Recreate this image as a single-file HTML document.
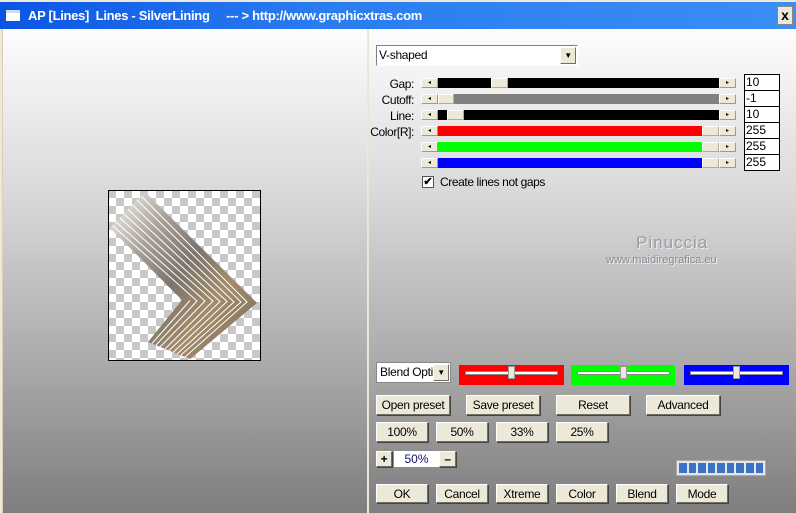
<!DOCTYPE html>
<html><head><meta charset="utf-8"><style>
*{margin:0;padding:0;box-sizing:border-box}
body{width:796px;height:513px;overflow:hidden;position:relative;font-family:"Liberation Sans",sans-serif;font-size:12px;background:#ece9d8}
.a{position:absolute}
#title{left:0;top:2px;width:796px;height:27px;background:linear-gradient(90deg,#0b55e4 0%,#2a7cf0 40%,#3b8ef5 100%);color:#fff;font-weight:bold;font-size:13px;line-height:27px}
#left{left:2px;top:29px;width:365px;height:484px;background:linear-gradient(#fdfdfd 0%,#d8d8d8 35%,#a9a9a9 70%,#7e7e7e 100%);border-left:1px solid #d8d0b8}
#right{left:368px;top:29px;width:428px;height:484px;background:linear-gradient(#fdfdfd 0%,#d8d8d8 35%,#a9a9a9 70%,#7e7e7e 100%);border-left:1px solid #e8e4d8}
.btn{position:absolute;background:#ece9d8;border:1px solid;border-color:#fff #716f64 #716f64 #fff;box-shadow:1px 1px 0 #444;text-align:center;font-size:12px;color:#000;line-height:18px;letter-spacing:-0.3px}
.arr{position:absolute;width:17px;height:10px;background:#ece9d8;border:1px solid;border-color:#fff #999 #999 #fff;font-size:6px;line-height:8px;text-align:center}
.thumb{position:absolute;height:10px;background:#ece9d8;border:1px solid;border-color:#fff #aaa #aaa #fff}
.val{position:absolute;left:744px;width:36px;height:17px;background:#fff;border:1px solid #000;font-size:12px;line-height:15px;padding-left:1px}
.lbl{position:absolute;right:382px;font-size:12px;color:#000;letter-spacing:-0.4px}
</style></head><body>
<div class="a" id="title"><span class="a" style="left:6px;top:8px;width:14px;height:11px;background:#fff;border-top:3px solid #cde"></span><span class="a" style="left:28px;top:0;letter-spacing:-0.3px">AP [Lines]&nbsp; Lines - SilverLining&nbsp;&nbsp;&nbsp;&nbsp; --- &gt; http://www.graphicxtras.com</span>
<span class="a" style="left:777px;top:4px;width:16px;height:19px;background:#ece9d8;border:1px solid #888;color:#000;font-size:14px;line-height:17px;text-align:center;font-weight:bold">x</span></div>
<div class="a" id="left"></div>
<div class="a" id="right"></div>

<svg class="a" style="left:108px;top:190px" width="153" height="171" viewBox="0 0 153 171">
<defs><pattern id="ck" width="16" height="16" patternUnits="userSpaceOnUse"><rect width="16" height="16" fill="#fff"/><rect width="8" height="8" fill="#c8c8c8"/><rect x="8" y="8" width="8" height="8" fill="#c8c8c8"/></pattern>
<linearGradient id="g" gradientUnits="userSpaceOnUse" x1="5" y1="20" x2="150" y2="130"><stop offset="0" stop-color="#e8e4de"/><stop offset="0.25" stop-color="#a8a098"/><stop offset="0.5" stop-color="#7c746c"/><stop offset="0.75" stop-color="#a38c6a"/><stop offset="1" stop-color="#857560"/></linearGradient>
</defs>
<rect x="0.5" y="0.5" width="152" height="170" fill="url(#ck)" stroke="#000"/>
<path d="M37 2 L2 38 L74 110 L40 152 L82 169 L149 113 Z" fill="url(#g)" stroke="none"/>
<g stroke="#fff" stroke-width="1" fill="none">
<polyline points="33,6 139,112 77,167"/>
<polyline points="29,10 133,112 73,165"/>
<polyline points="24.5,15 126,112 69,164"/>
<polyline points="20,19.5 119,111.5 65,162.5"/>
<polyline points="16,24 112,111.5 61,160.5"/>
<polyline points="12,28 105,111 57,159"/>
<polyline points="8,32 97,111 52,157"/>
<polyline points="4.5,35.5 89,111 48,155"/>
<polyline points="82,110.5 44,153.5"/>
</g></svg>

<div class="a" style="left:376px;top:45px;width:202px;height:21px;background:#fff;border:1px solid;border-color:#808080 #fff #fff #808080;font-size:12px;line-height:19px;padding-left:2px;letter-spacing:-0.3px">V-shaped</div>
<div class="btn" style="left:560px;top:47px;width:16px;height:17px;font-size:8px;line-height:15px;box-shadow:none">▼</div>

<div class="lbl" style="top:77px">Gap:</div>
<div class="lbl" style="top:93px">Cutoff:</div>
<div class="lbl" style="top:109px">Line:</div>
<div class="lbl" style="top:125px">Color[R]:</div>

<div class="a" style="left:438px;top:78px;width:281px;height:10px;background:#000"></div>
<div class="thumb" style="left:491px;top:78px;width:17px"></div>
<div class="a" style="left:438px;top:94px;width:281px;height:10px;background:#808080"></div>
<div class="thumb" style="left:438px;top:94px;width:16px"></div>
<div class="a" style="left:438px;top:110px;width:281px;height:10px;background:#000"></div>
<div class="thumb" style="left:447px;top:110px;width:17px"></div>
<div class="a" style="left:438px;top:126px;width:264px;height:10px;background:#f00"></div>
<div class="thumb" style="left:702px;top:126px;width:17px"></div>
<div class="a" style="left:438px;top:142px;width:264px;height:10px;background:#0f0"></div>
<div class="thumb" style="left:702px;top:142px;width:17px"></div>
<div class="a" style="left:438px;top:158px;width:264px;height:10px;background:#00f"></div>
<div class="thumb" style="left:702px;top:158px;width:17px"></div>
<div class="arr" style="left:421px;top:78px">◂</div><div class="arr" style="left:719px;top:78px">▸</div>
<div class="arr" style="left:421px;top:94px">◂</div><div class="arr" style="left:719px;top:94px">▸</div>
<div class="arr" style="left:421px;top:110px">◂</div><div class="arr" style="left:719px;top:110px">▸</div>
<div class="arr" style="left:421px;top:126px">◂</div><div class="arr" style="left:719px;top:126px">▸</div>
<div class="arr" style="left:421px;top:142px">◂</div><div class="arr" style="left:719px;top:142px">▸</div>
<div class="arr" style="left:421px;top:158px">◂</div><div class="arr" style="left:719px;top:158px">▸</div>
<div class="val" style="top:74px">10</div>
<div class="val" style="top:90px">-1</div>
<div class="val" style="top:106px">10</div>
<div class="val" style="top:122px">255</div>
<div class="val" style="top:138px">255</div>
<div class="val" style="top:154px">255</div>

<div class="a" style="left:422px;top:176px;width:12px;height:12px;background:#fff;border:1px solid #555;font-size:11px;line-height:10px;text-align:center;font-weight:bold">✔</div>
<div class="a" style="left:440px;top:175px;font-size:12px;letter-spacing:-0.4px">Create lines not gaps</div>

<div class="a" style="left:636px;top:233px;font-size:17px;color:#9a9aa8;letter-spacing:1px;text-shadow:1px 1px 0 #eee">Pinuccia</div>
<div class="a" style="left:606px;top:254px;font-size:11px;color:#8a8a96;text-shadow:1px 1px 0 #eee">www.maidiregrafica.eu</div>

<div class="a" style="left:376px;top:362px;width:75px;height:21px;background:#fff;border:1px solid #888;font-size:12px;line-height:19px;padding-left:3px;overflow:hidden;white-space:nowrap;letter-spacing:-0.3px">Blend Opti</div>
<div class="btn" style="left:433px;top:364px;width:16px;height:17px;font-size:8px;line-height:15px;box-shadow:none">▼</div>
<div class="a" style="left:459px;top:365px;width:105px;height:20px;background:#f00"></div>
<div class="a" style="left:571px;top:365px;width:104px;height:20px;background:#0f0"></div>
<div class="a" style="left:684px;top:365px;width:105px;height:20px;background:#00f"></div>
<div class="a" style="left:465px;top:371px;width:93px;height:4px;background:#fff;border:1px solid #888"></div>
<div class="a" style="left:577px;top:371px;width:93px;height:4px;background:#fff;border:1px solid #888"></div>
<div class="a" style="left:690px;top:371px;width:93px;height:4px;background:#fff;border:1px solid #888"></div>
<div class="a" style="left:508px;top:366px;width:7px;height:13px;background:#ece9d8;border:1px solid #999"></div>
<div class="a" style="left:620px;top:366px;width:7px;height:13px;background:#ece9d8;border:1px solid #999"></div>
<div class="a" style="left:733px;top:366px;width:7px;height:13px;background:#ece9d8;border:1px solid #999"></div>

<div class="btn" style="left:376px;top:395px;width:74px;height:20px">Open preset</div>
<div class="btn" style="left:466px;top:395px;width:74px;height:20px">Save preset</div>
<div class="btn" style="left:556px;top:395px;width:74px;height:20px">Reset</div>
<div class="btn" style="left:646px;top:395px;width:74px;height:20px">Advanced</div>
<div class="btn" style="left:376px;top:422px;width:52px;height:20px">100%</div>
<div class="btn" style="left:436px;top:422px;width:52px;height:20px">50%</div>
<div class="btn" style="left:496px;top:422px;width:52px;height:20px">33%</div>
<div class="btn" style="left:556px;top:422px;width:52px;height:20px">25%</div>
<div class="btn" style="left:376px;top:451px;width:16px;height:16px;line-height:14px;font-weight:bold">+</div>
<div class="a" style="left:394px;top:451px;width:45px;height:16px;background:#fff;color:#14146e;text-align:center;line-height:16px">50%</div>
<div class="btn" style="left:439px;top:451px;width:17px;height:16px;line-height:14px;font-weight:bold">–</div>
<div class="a" style="left:676px;top:460px;width:90px;height:16px;background:#e6e6e6;border:1px solid #aaa;padding:2px;display:flex;gap:2px">
<i style="flex:1;background:#3a72c8"></i><i style="flex:1;background:#3a72c8"></i><i style="flex:1;background:#3a72c8"></i><i style="flex:1;background:#3a72c8"></i><i style="flex:1;background:#3a72c8"></i><i style="flex:1;background:#3a72c8"></i><i style="flex:1;background:#3a72c8"></i><i style="flex:1;background:#3a72c8"></i><i style="flex:1;background:#3a72c8"></i></div>

<div class="btn" style="left:376px;top:484px;width:52px;height:19px">OK</div>
<div class="btn" style="left:436px;top:484px;width:52px;height:19px">Cancel</div>
<div class="btn" style="left:496px;top:484px;width:52px;height:19px">Xtreme</div>
<div class="btn" style="left:556px;top:484px;width:52px;height:19px">Color</div>
<div class="btn" style="left:616px;top:484px;width:52px;height:19px">Blend</div>
<div class="btn" style="left:676px;top:484px;width:52px;height:19px">Mode</div>
</body></html>
